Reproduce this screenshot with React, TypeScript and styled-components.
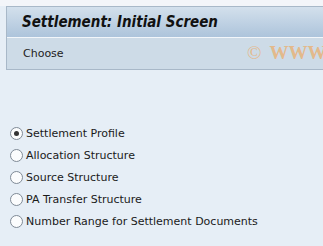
import styled, { createGlobalStyle } from 'styled-components';
import { useState } from 'react';

const GlobalStyle = createGlobalStyle`
  html, body {
    margin: 0;
    padding: 0;
    background: #e6eef6;
  }
  body {
    width: 323px;
    height: 246px;
    overflow: hidden;
    font-family: 'DejaVu Sans', sans-serif;
  }
`;

const Page = styled.div`
  width: 323px;
  height: 246px;
  padding-top: 6px;
  box-sizing: border-box;
  background: linear-gradient(#f3f5f9 0, #f3f5f9 6px, #e6eef6 6px);
`;

const Header = styled.div`
  margin-left: 6px;
  border: 1px solid #a8b8c8;
  border-right: 0;
`;

const TitleBar = styled.div`
  height: 30px;
  display: flex;
  align-items: center;
  padding-left: 15px;
  background: linear-gradient(#d3e0ec, #adc4db);
  border-bottom: 1px solid #f2f6fa;
`;

const Title = styled.h1`
  margin: 0;
  font-family: 'DejaVu Sans Condensed', 'DejaVu Sans', sans-serif;
  font-stretch: condensed;
  font-size: 15px;
  font-weight: 700;
  font-style: italic;
  color: #111;
`;

const Toolbar = styled.div`
  height: 31px;
  display: flex;
  align-items: center;
  padding-left: 16px;
  background: #cddbe7;
  position: relative;
  overflow: hidden;
`;

const ToolButton = styled.span`
  font-size: 11px;
  color: #222;
`;

const Watermark = styled.span`
  position: absolute;
  left: 240px;
  top: 4px;
  font-family: 'Liberation Serif', serif;
  font-size: 19px;
  font-weight: 700;
  color: #e8b47c;
  opacity: 0.85;
  white-space: nowrap;
`;

const Copy = styled.span`
  font-weight: 400;
  margin-right: 8px;
`;

const Options = styled.div`
  display: flex;
  flex-direction: column;
  padding: 52px 0 0 10px;
`;

const Option = styled.label`
  display: flex;
  align-items: center;
  height: 22px;
  gap: 3px;
  font-size: 11px;
  color: #1a1a1a;
  cursor: pointer;
`;

const Dot = styled.span<{ $on: boolean }>`
  width: 11px;
  height: 11px;
  border-radius: 50%;
  border: 1px solid #7f8a96;
  background: #fbfcfd;
  display: flex;
  align-items: center;
  justify-content: center;
  &::after {
    content: '';
    width: 5px;
    height: 5px;
    border-radius: 50%;
    background: ${({ $on }) => ($on ? '#333' : 'transparent')};
  }
`;

const items = [
  'Settlement Profile',
  'Allocation Structure',
  'Source Structure',
  'PA Transfer Structure',
  'Number Range for Settlement Documents',
];

export default function App() {
  const [sel, setSel] = useState(0);
  return (
    <>
      <GlobalStyle />
      <Page>
        <Header>
          <TitleBar>
            <Title>Settlement: Initial Screen</Title>
          </TitleBar>
          <Toolbar>
            <ToolButton>Choose</ToolButton>
            <Watermark>
              <Copy>©</Copy>WWW
            </Watermark>
          </Toolbar>
        </Header>
        <Options>
          {items.map((t, i) => (
            <Option key={t} onClick={() => setSel(i)}>
              <Dot $on={sel === i} />
              {t}
            </Option>
          ))}
        </Options>
      </Page>
    </>
  );
}
